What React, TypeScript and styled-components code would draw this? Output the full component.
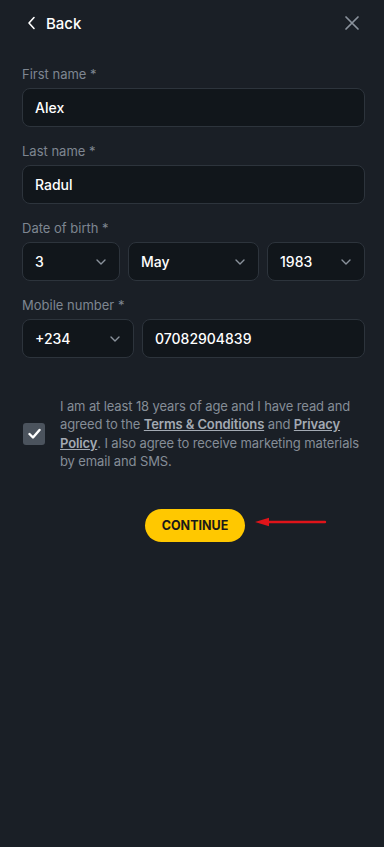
import React from "react";
import styled, { createGlobalStyle } from "styled-components";

const GlobalStyle = createGlobalStyle`
  html, body { margin: 0; padding: 0; background: #1a1f26; }
  body { font-family: "Inter", "Noto Sans", sans-serif; -webkit-font-smoothing: antialiased; }
  * { box-sizing: border-box; }
`;

const Page = styled.div`
  min-height: 847px;
  background: #1a1f26;
  padding: 0 19px 0 22px;
  display: flex;
  flex-direction: column;
`;

const Header = styled.div`
  height: 46px;
  display: flex;
  align-items: center;
  justify-content: space-between;
  padding: 0 5px 0 5px;
`;

const BackButton = styled.button`
  display: flex;
  align-items: center;
  gap: 10px;
  background: none;
  border: none;
  padding: 0;
  color: #ffffff;
  font-family: inherit;
  font-size: 15px;
  font-weight: 500;
  cursor: pointer;
`;

const CloseButton = styled.button`
  background: none;
  border: none;
  padding: 0;
  display: flex;
  cursor: pointer;
`;

const Form = styled.div`
  display: flex;
  flex-direction: column;
  gap: 16px;
  padding-top: 20px;
`;

const Field = styled.div`
  display: flex;
  flex-direction: column;
  gap: 6px;
`;

const Label = styled.div`
  color: #7e8691;
  font-size: 13px;
  line-height: 16px;
`;

const Row = styled.div<{ $cols: string }>`
  display: grid;
  grid-template-columns: ${(p) => p.$cols};
  gap: 8px;
`;

const Box = styled.div`
  height: 39px;
  background: #11161b;
  border: 1px solid #2d343c;
  border-radius: 8px;
  display: flex;
  align-items: center;
  justify-content: space-between;
  padding: 0 12px 0 12px;
  color: #ffffff;
  font-size: 14px;
  font-weight: 500;
`;

const Chevron = () => (
  <svg width="12" height="8" viewBox="0 0 12 8" fill="none">
    <path d="M2 2l4 4 4-4" stroke="#8a929c" strokeWidth="1.4" strokeLinecap="round" strokeLinejoin="round" />
  </svg>
);

const Consent = styled.div`
  margin-top: 39px;
  display: flex;
  align-items: center;
  gap: 15px;
`;

const Check = styled.div`
  flex: none;
  width: 22px;
  height: 22px;
  border-radius: 3px;
  background: #4b535d;
  display: flex;
  align-items: center;
  justify-content: center;
  margin-left: 1px;
`;

const ConsentText = styled.p`
  margin: 0;
  color: #858d97;
  font-size: 13px;
  letter-spacing: -0.12px;
  line-height: 18.4px;
`;

const LinkText = styled.span`
  color: #a3aab3;
  font-weight: 600;
  text-decoration: underline;
`;

const Actions = styled.div`
  margin-top: 38px;
  display: flex;
  justify-content: center;
  position: relative;
  padding-left: 3px;
`;

const ContinueButton = styled.button`
  height: 33px;
  padding: 0 17px;
  border-radius: 17px;
  border: none;
  background: #ffc800;
  color: #1a1a1a;
  font-family: inherit;
  font-size: 12.5px;
  font-weight: 700;
  cursor: pointer;
`;

const Arrow = styled.svg`
  position: absolute;
  left: 233px;
  top: 8px;
`;

export default function App() {
  return (
    <>
      <GlobalStyle />
      <Page>
        <Header>
          <BackButton>
            <svg width="9" height="14" viewBox="0 0 9 14" fill="none">
              <path d="M7 1.5L2 7l5 5.5" stroke="#ffffff" strokeWidth="1.6" strokeLinecap="round" strokeLinejoin="round" />
            </svg>
            Back
          </BackButton>
          <CloseButton>
            <svg width="16" height="16" viewBox="0 0 16 16" fill="none">
              <path d="M2 2l12 12M14 2L2 14" stroke="#8a929c" strokeWidth="1.7" strokeLinecap="round" />
            </svg>
          </CloseButton>
        </Header>
        <Form>
          <Field>
            <Label>First name *</Label>
            <Box>Alex</Box>
          </Field>
          <Field>
            <Label>Last name *</Label>
            <Box>Radul</Box>
          </Field>
          <Field>
            <Label>Date of birth *</Label>
            <Row $cols="98px 131px 1fr">
              <Box>3<Chevron /></Box>
              <Box>May<Chevron /></Box>
              <Box>1983<Chevron /></Box>
            </Row>
          </Field>
          <Field>
            <Label>Mobile number *</Label>
            <Row $cols="112px 1fr">
              <Box>+234<Chevron /></Box>
              <Box>07082904839</Box>
            </Row>
          </Field>
        </Form>
        <Consent>
          <Check>
            <svg width="13" height="11" viewBox="0 0 13 11" fill="none">
              <path d="M1.5 6l3.5 3.5L11.5 2" stroke="#ffffff" strokeWidth="2.4" strokeLinecap="round" strokeLinejoin="round" />
            </svg>
          </Check>
          <ConsentText>
            I am at least 18 years of age and I have read and agreed to the{" "}
            <LinkText>Terms &amp; Conditions</LinkText> and <LinkText>Privacy Policy</LinkText>. I also
            agree to receive marketing materials by email and SMS.
          </ConsentText>
        </Consent>
        <Actions>
          <ContinueButton>CONTINUE</ContinueButton>
          <Arrow width="72" height="10" viewBox="0 0 72 10">
            <path d="M12 5H70" stroke="#e0141a" strokeWidth="2.4" strokeLinecap="round" />
            <path d="M0 5l14-4.2v8.4z" fill="#e0141a" />
          </Arrow>
        </Actions>
      </Page>
    </>
  );
}
